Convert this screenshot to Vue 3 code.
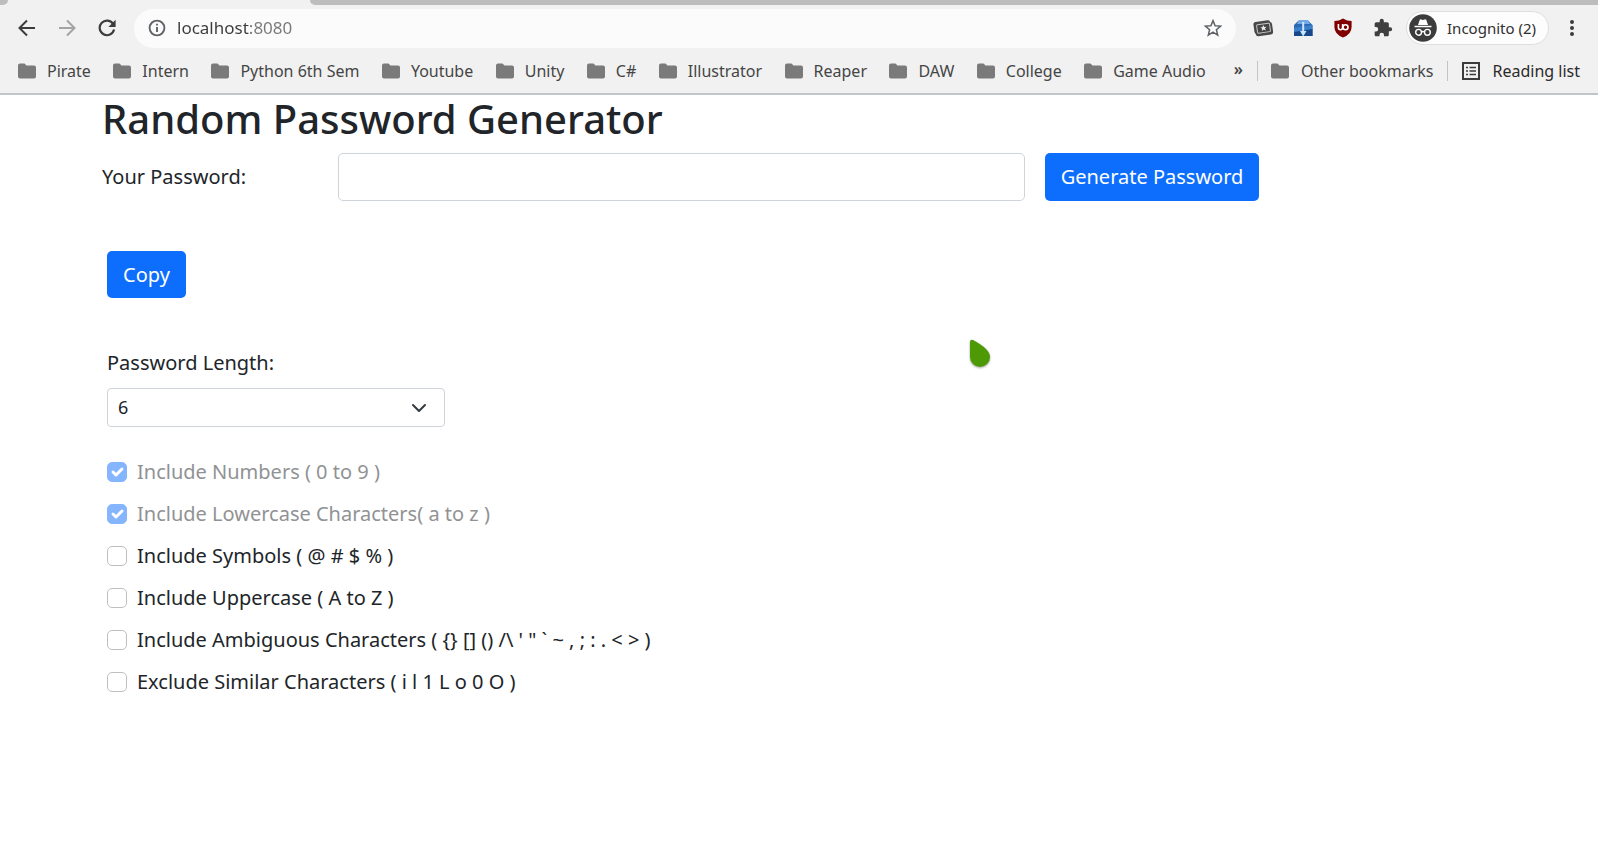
<script setup>
import { ref } from 'vue'

const bookmarks = [
  'Pirate', 'Intern', 'Python 6th Sem', 'Youtube', 'Unity', 'C#',
  'Illustrator', 'Reaper', 'DAW', 'College', 'Game Audio'
]

const address = ref('localhost:8080')
const password = ref('')
const length = ref(6)
const lengths = Array.from({ length: 27 }, (_, i) => i + 6)

const options = ref([
  { id: 'numbers', label: 'Include Numbers ( 0 to 9 )', checked: true, disabled: true },
  { id: 'lowercase', label: 'Include Lowercase Characters( a to z )', checked: true, disabled: true },
  { id: 'symbols', label: 'Include Symbols ( @ # $ % )', checked: false, disabled: false },
  { id: 'uppercase', label: 'Include Uppercase ( A to Z )', checked: false, disabled: false },
  { id: 'ambiguous', label: 'Include Ambiguous Characters ( {} [] () /\\ \' " ` ~ , ; : . < > )', checked: false, disabled: false },
  { id: 'similar', label: 'Exclude Similar Characters ( i l 1 L o 0 O )', checked: false, disabled: false }
])

const pools = {
  numbers: '0123456789',
  lowercase: 'abcdefghijklmnopqrstuvwxyz',
  symbols: '@#$%',
  uppercase: 'ABCDEFGHIJKLMNOPQRSTUVWXYZ',
  ambiguous: '{}[]()/\\\'"`~,;:.<>'
}

function generate() {
  const on = options.value.filter((o) => o.checked).map((o) => o.id)
  let pool = on.map((id) => pools[id] || '').join('')
  if (on.includes('similar')) pool = pool.replace(/[il1Lo0O]/g, '')
  password.value = Array.from({ length: length.value }, () => pool[Math.floor(Math.random() * pool.length)]).join('')
}

function copy() {
  navigator.clipboard?.writeText(password.value)
}
</script>

<template>
  <div class="window">
    <header class="chrome">
      <div class="tabstrip">
        <span class="tab-left"></span>
        <span class="tab-active"></span>
        <span class="tab-rest"></span>
      </div>

      <div class="toolbar">
        <div class="nav-buttons">
          <button class="icon-btn" aria-label="Back">
            <svg width="18" height="18" viewBox="0 0 18 18"><path d="M17 9H2M9 1.500L1.500 9L9 16.500" fill="none" stroke="#3c3c3c" stroke-width="2" /></svg>
          </button>
          <button class="icon-btn" aria-label="Forward" disabled>
            <svg width="18" height="18" viewBox="0 0 18 18"><path d="M1 9H16M9 1.500L16.500 9L9 16.500" fill="none" stroke="#a3a3a3" stroke-width="2" /></svg>
          </button>
          <button class="icon-btn" aria-label="Reload">
            <svg width="18" height="18" viewBox="0 0 18 18">
              <path d="M15.300 5.200A7.300 7.300 0 1 0 16.100 10.600" fill="none" stroke="#3c3c3c" stroke-width="2.200" />
              <path d="M17.600 .8V8H10.400Z" fill="#3c3c3c" />
            </svg>
          </button>
        </div>

        <div class="omnibox">
          <svg width="18" height="18" viewBox="0 0 18 18">
            <circle cx="9" cy="9" r="7.400" fill="none" stroke="#5f6368" stroke-width="1.900" />
            <path d="M9 8V13M9 4.800V6.600" stroke="#5f6368" stroke-width="1.900" />
          </svg>
          <input v-model="address" class="address" type="text" aria-label="Address" />
          <button class="icon-btn" aria-label="Bookmark this page">
            <svg width="18" height="18" viewBox="0 0 18 18"><path d="M9 1.600L11.100 6.700L16.600 7.100L12.400 10.700L13.700 16.100L9 13.200L4.300 16.100L5.600 10.700L1.400 7.100L6.900 6.700Z" fill="none" stroke="#5f6368" stroke-width="1.500" /></svg>
          </button>
        </div>

        <div class="extensions">
          <button class="icon-btn" aria-label="Tickets extension">
            <svg width="20" height="20" viewBox="0 0 20 20">
              <g transform="rotate(-8 10 10)">
                <rect x="1" y="3" width="17" height="12" rx="2.500" fill="#484848" />
                <rect x="2" y="5" width="17.500" height="12.500" rx="2.500" fill="#484848" />
                <rect x="4" y="6" width="13" height="8.500" rx="1" fill="#444" stroke="#c8c8c8" stroke-width="1" />
                <path d="M10.500 7L11.400 9.100L13.700 9.200L11.900 10.600L12.600 12.800L10.500 11.600L8.400 12.800L9.100 10.600L7.300 9.200L9.600 9.100Z" fill="#eee" />
              </g>
            </svg>
          </button>
          <button class="icon-btn" aria-label="Downloader extension">
            <svg width="20" height="20" viewBox="0 0 20 20">
              <path d="M1 7L4 4Q6 1.500 9 2H13Q16 2 17 4.500L19.500 7V18H1Z" fill="#2d68b5" />
              <path d="M4 6Q5 2 8 2H13Q16 2 17 6Z" fill="#75a9e4" />
              <path d="M1 11H19.500V18H1Z" fill="#174889" />
              <path d="M1 10L19.500 7V11L1 14Z" fill="#3c7fcb" />
              <path d="M9.200 4H11.200V13H13.500L10.200 18.500L7 13H9.200Z" fill="#c8e7ff" />
            </svg>
          </button>
          <button class="icon-btn" aria-label="Content blocker">
            <svg width="20" height="20" viewBox="0 0 20 20">
              <path d="M10 .4Q14 3 18.600 3V9Q18.600 16 10 19.600Q1.400 16 1.400 9V3Q6 3 10 .4Z" fill="#800000" />
              <path d="M5.400 6V9.500Q5.400 11.700 7.400 11.700Q9.600 11.700 9.600 9.500V6" fill="none" stroke="#fff" stroke-width="1.600" />
              <circle cx="12.500" cy="9.200" r="2.500" fill="none" stroke="#fff" stroke-width="1.600" />
            </svg>
          </button>
          <button class="icon-btn" aria-label="Extensions">
            <svg width="20" height="20" viewBox="0 0 24 24"><path d="M20.500 11H19V7c0-1.100-.9-2-2-2h-4V3.500a2.500 2.500 0 0 0-5 0V5H4c-1.100 0-2 .9-2 2v3.800h1.500a2.700 2.700 0 0 1 0 5.400H2V20c0 1.100.9 2 2 2h3.800v-1.500a2.700 2.700 0 0 1 5.400 0V22H17c1.100 0 2-.9 2-2v-4h1.500a2.500 2.500 0 0 0 0-5z" fill="#3f3f3f" /></svg>
          </button>
        </div>

        <button class="profile">
          <svg width="28" height="28" viewBox="0 0 28 28">
            <circle cx="14" cy="14" r="13.800" fill="#3c3c3c" />
            <path d="M9 11L10.500 6.500Q11 5 12.300 5.400L14 6L15.700 5.400Q17 5 17.500 6.500L19 11Z" fill="#fff" />
            <path d="M5.500 12.500H22.500" stroke="#fff" stroke-width="1.500" />
            <g fill="none" stroke="#fff" stroke-width="1.400">
              <circle cx="9.600" cy="18.300" r="2.900" />
              <circle cx="18.400" cy="18.300" r="2.900" />
              <path d="M12.500 18Q14 17 15.500 18" />
            </g>
          </svg>
          <span>Incognito (2)</span>
        </button>

        <button class="icon-btn menu" aria-label="Browser menu">
          <svg width="6" height="18" viewBox="0 0 6 18" fill="#3c3c3c"><circle cx="3" cy="3" r="2" /><circle cx="3" cy="9" r="2" /><circle cx="3" cy="15" r="2" /></svg>
        </button>
      </div>

      <nav class="bookmarks" aria-label="Bookmarks">
        <div class="bookmark-list">
          <button v-for="name in bookmarks" :key="name" class="bookmark">
            <svg width="18" height="16" viewBox="0 0 18 16"><path d="M2 .5H6.500L8.500 2.500H16Q18 2.500 18 4.500V13.500Q18 15.500 16 15.500H2Q0 15.500 0 13.500V2.500Q0 .5 2 .5Z" fill="#7a7a7a" /></svg>
            <span>{{ name }}</span>
          </button>
        </div>
        <button class="bookmark more" aria-label="More bookmarks">»</button>
        <div class="bookmark-end">
          <button class="bookmark">
            <svg width="18" height="16" viewBox="0 0 18 16"><path d="M2 .5H6.500L8.500 2.500H16Q18 2.500 18 4.500V13.500Q18 15.500 16 15.500H2Q0 15.500 0 13.500V2.500Q0 .5 2 .5Z" fill="#7a7a7a" /></svg>
            <span>Other bookmarks</span>
          </button>
          <button class="bookmark reading">
            <svg width="18" height="18" viewBox="0 0 18 18">
              <rect x="1" y="1" width="16" height="16" fill="none" stroke="#3c3c3c" stroke-width="2" />
              <path d="M4 5.500H6M4 9H6M4 12.500H6M7.500 5.500H14M7.500 9H14M7.500 12.500H14" stroke="#3c3c3c" stroke-width="1.600" />
            </svg>
            <span>Reading list</span>
          </button>
        </div>
      </nav>
    </header>

    <main class="page">
      <h1>Random Password Generator</h1>

      <div class="password-row">
        <label for="password">Your Password:</label>
        <input id="password" v-model="password" class="password" type="text" />
        <button class="btn" @click="generate">Generate Password</button>
      </div>

      <div class="settings">
        <button class="btn copy" @click="copy">Copy</button>

        <div class="length">
          <label for="length">Password Length:</label>
          <div class="select-wrap">
            <select id="length" v-model="length">
              <option v-for="n in lengths" :key="n" :value="n">{{ n }}</option>
            </select>
            <svg class="chevron" width="16" height="16" viewBox="0 0 16 16"><path d="M2 5l6 6 6-6" fill="none" stroke="#343a40" stroke-width="2" stroke-linecap="round" stroke-linejoin="round" /></svg>
          </div>
        </div>

        <div class="options">
          <div v-for="o in options" :key="o.id" class="option">
            <span class="check">
              <input :id="o.id" v-model="o.checked" type="checkbox" :disabled="o.disabled" />
              <svg v-if="o.checked" viewBox="0 0 20 20"><path d="M6 10l3 3 6-6" fill="none" stroke="#fff" stroke-width="3" stroke-linecap="round" stroke-linejoin="round" /></svg>
            </span>
            <label :for="o.id" :class="{ muted: o.disabled }">{{ o.label }}</label>
          </div>
        </div>
      </div>
    </main>

    <svg class="pointer" width="24" height="32" viewBox="0 0 24 32" aria-hidden="true">
      <path d="M2 3Q2 0 5 1Q22 10 22 18A10 10 0 0 1 2 18Z" fill="#4e9a06" />
    </svg>
  </div>
</template>

<style>
body {
  background: #fff;
}
</style>

<style scoped>
.window {
  position: relative;
  min-height: 100vh;
  font-family: "Noto Sans", "Open Sans", sans-serif;
  color: #212529;
}

.window * {
  box-sizing: border-box;
}

button,
input,
select {
  margin: 0;
  font-family: inherit;
}

svg {
  display: block;
  flex: none;
}

/* Browser frame */
.chrome {
  background: #f1f1f1;
  border-bottom: 2px solid #c1c5c9;
}

.tabstrip {
  display: flex;
  height: 5px;
}

.tab-left {
  width: 8px;
  background: #bdbdbd;
  border-bottom-right-radius: 8px;
}

.tab-active {
  width: 302px;
}

.tab-rest {
  flex: 1;
  background: #bdbdbd;
  border-bottom-left-radius: 8px;
}

.toolbar {
  display: flex;
  align-items: center;
  height: 46px;
  padding: 0 23px 0 18px;
}

.icon-btn {
  padding: 0;
  border: 0;
  background: none;
}

.nav-buttons {
  display: flex;
  gap: 22px;
  margin-right: 18px;
}

.omnibox {
  display: flex;
  flex: 1;
  align-items: center;
  gap: 11px;
  height: 39px;
  padding: 0 14px;
  border-radius: 20px;
  background: #fbfbfb;
}

.address {
  flex: 1;
  min-width: 0;
  padding: 0;
  border: 0;
  outline: 0;
  font-size: 17px;
  line-height: 26px;
  color: transparent;
  caret-color: #333;
  background: linear-gradient(to right, #3b3b3b 72px, #777 72px);
  background-clip: text;
}

.extensions {
  display: flex;
  gap: 20px;
  margin: 0 13px 0 17px;
}

.profile {
  display: flex;
  align-items: center;
  gap: 10px;
  height: 34px;
  padding: 0 12px 0 2px;
  border: 1px solid #dedede;
  border-radius: 17px;
  background: #fdfdfd;
  color: #303030;
  font-size: 15px;
}

.menu {
  margin-left: 20px;
}

.bookmarks {
  display: flex;
  align-items: center;
  height: 42px;
  padding: 0 18px 2px;
}

.bookmark-list {
  display: flex;
  flex: 1;
  justify-content: space-between;
}

.bookmark {
  display: flex;
  align-items: center;
  gap: 11px;
  padding: 0;
  border: 0;
  background: none;
  color: #454545;
  font-size: 16px;
  line-height: 20px;
  white-space: nowrap;
}

.more {
  padding: 0 14px 4px 28px;
  font-weight: 600;
}

.bookmark-end {
  display: flex;
  gap: 14px;
  padding-left: 13px;
  border-left: 1px solid #c1c5c9;
}

.bookmark-end .bookmark {
  gap: 12px;
}

.bookmark-end .reading {
  padding-left: 14px;
  border-left: 1px solid #c1c5c9;
  color: #2b2b2b;
}

/* Password form */
.page {
  max-width: 1434px;
  margin: 0 auto;
  padding: 0 20px;
  font-size: 20px;
  line-height: 30px;
}

h1 {
  margin: 0 0 10px;
  font-size: 40px;
  font-weight: 500;
  line-height: 48px;
}

.password-row {
  display: grid;
  grid-template-columns: repeat(12, 1fr);
  column-gap: 20px;
  align-items: center;
}

.password-row label {
  grid-column: span 2;
}

.password {
  grid-column: span 6;
  width: 100%;
  height: 48px;
  padding: 8px 16px;
  border: 1px solid #ced4da;
  border-radius: 5px;
  background: #fff;
  color: #212529;
  font-size: 20px;
}

.btn {
  height: 48px;
  padding: 0 16px;
  border: 0;
  border-radius: 5px;
  background: #0d6efd;
  color: #fff;
  font-size: 20px;
  line-height: 30px;
  white-space: nowrap;
}

.password-row .btn {
  grid-column: span 4;
  justify-self: start;
}

.settings {
  display: flex;
  flex-direction: column;
  align-items: flex-start;
  padding: 50px 5px;
}

.settings .copy {
  height: 47px;
}

.length {
  display: flex;
  flex-direction: column;
  gap: 10px;
  width: 100%;
  max-width: 338px;
  margin: 50px 0 30px;
}

.select-wrap {
  position: relative;
}

select {
  display: block;
  width: 100%;
  height: 39px;
  padding: 0 10px 2px;
  border: 1px solid #ced4da;
  border-radius: 4px;
  appearance: none;
  background: #fff;
  color: #212529;
  font-size: 18px;
}

.chevron {
  position: absolute;
  top: 12px;
  right: 18px;
  pointer-events: none;
}

.options {
  display: grid;
  gap: 12px;
}

.option {
  display: flex;
  align-items: center;
  gap: 10px;
}

.check {
  display: grid;
  width: 20px;
  height: 20px;
}

.check > * {
  grid-area: 1 / 1;
}

.check svg {
  z-index: 1;
  width: 20px;
  height: 20px;
  pointer-events: none;
}

.check input {
  width: 20px;
  height: 20px;
  border: 1px solid #bfbfbf;
  border-radius: 5px;
  appearance: none;
  background: #fff;
}

.check input:checked {
  border-color: #0d6efd;
  background: #0d6efd;
}

.check input:disabled {
  opacity: 0.5;
}

.muted {
  color: #909294;
}

.pointer {
  position: absolute;
  top: 339px;
  left: 968px;
  filter: drop-shadow(0 1px 1px rgba(0, 0, 0, 0.35));
  pointer-events: none;
}
</style>
